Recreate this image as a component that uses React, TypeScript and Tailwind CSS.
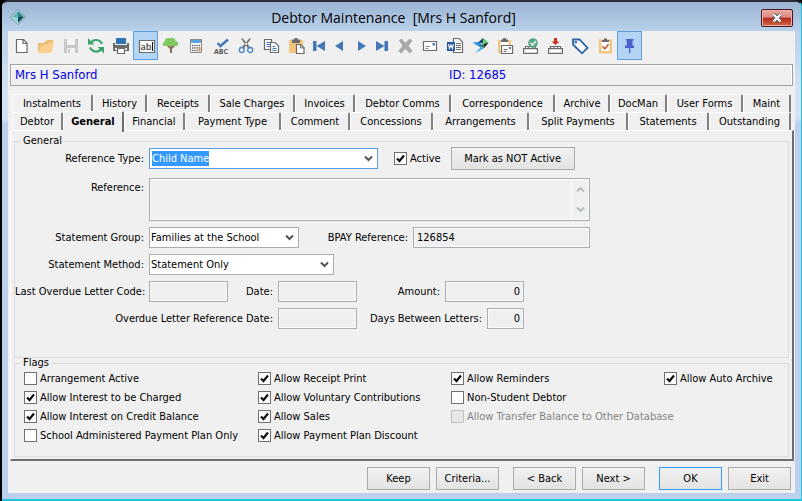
import React, { useState } from "react";

const TABS_BACK = ["Instalments", "History", "Receipts", "Sale Charges", "Invoices", "Debtor Comms", "Correspondence", "Archive", "DocMan", "User Forms", "Maint"];
const TABS_FRONT = ["Debtor", "General", "Financial", "Payment Type", "Comment", "Concessions", "Arrangements", "Split Payments", "Statements", "Outstanding"];

type Flag = { label: string; checked?: boolean; disabled?: boolean };

const FLAG_COLUMNS: Flag[][] = [
  [
    { label: "Arrangement Active" },
    { label: "Allow Interest to be Charged", checked: true },
    { label: "Allow Interest on Credit Balance", checked: true },
    { label: "School Administered Payment Plan Only" },
  ],
  [
    { label: "Allow Receipt Print", checked: true },
    { label: "Allow Voluntary Contributions", checked: true },
    { label: "Allow Sales", checked: true },
    { label: "Allow Payment Plan Discount", checked: true },
  ],
  [
    { label: "Allow Reminders", checked: true },
    { label: "Non-Student Debtor" },
    { label: "Allow Transfer Balance to Other Database", disabled: true },
  ],
  [{ label: "Allow Auto Archive", checked: true }],
];

const G = "#6b6b6b";
const B = "#4377b8";

const Tray = () => (
  <g fill="#fff" stroke={G} strokeWidth="1.2">
    <path d="M8.5 18v-2.500h3.500V18M12 18v-2.500h3.500V18M15.500 18v-2.500h3V18" />
    <path d="M6.6 17.6h13.8v4.800H6.6z" />
  </g>
);

const ICONS: { name: string; narrow?: boolean; active?: boolean; art: React.ReactNode }[] = [
  {
    name: "New",
    art: <path d="M8.500 8.500h7l3.500 3.500v9.500H8.500zM15 8.500v4h4" fill="#fff" stroke={G} strokeWidth="1.2" />,
  },
  {
    name: "Open",
    art: (
      <>
        <path d="M5 22V12h5.5l1.5-1.5h1L14 9h6v5H9z" fill="#eebb74" />
        <path d="M5 22l4-8.5h5l2-2h5L18.5 22z" fill="#fbcf8e" />
      </>
    ),
  },
  {
    name: "Save",
    art: (
      <>
        <path d="M6 8h14v14H6z" fill="#c9c9c9" />
        <path d="M9 8h8v6H9zM9 17h8v5H9z" fill="#f3f3f3" />
        <path d="M10 18h2v4h-2z" fill="#c9c9c9" />
      </>
    ),
  },
  {
    name: "Refresh",
    art: (
      <g fill="none" stroke="#3da56b" strokeWidth="2.2">
        <path d="M8 12.5C9.500 8 16.500 7.500 19 13" />
        <path d="M18.500 17.500C16.500 21.500 10 22 7 16.500" />
        <path d="M5 7v6.500h6.500zM21 22.500V16h-6.500z" fill="#3da56b" stroke="none" />
      </g>
    ),
  },
  {
    name: "Print",
    art: (
      <>
        <path d="M5 12h16v8H5z" fill={G} />
        <path d="M7 11h12v3H7z" fill="#efefef" />
        <path d="M8 7h10v6H8z" fill="#2f73b5" />
        <path d="M7 17h12v2H7z" fill="#efefef" />
        <path d="M9.5 17.5h7v5h-7z" fill="#fff" stroke={G} strokeWidth="1.200" />
      </>
    ),
  },
  {
    name: "Edit text",
    active: true,
    art: (
      <>
        <path d="M6.5 9.500h15v12h-15z" fill="#fff" stroke={G} strokeWidth="1.2" />
        <text x="7.500" y="19" fontSize="9" fontWeight="600" fill="#444" fontFamily="Open Sans, sans-serif">ab</text>
        <path d="M19.500 11v9" stroke="#111" />
      </>
    ),
  },
  {
    name: "Tree",
    art: (
      <>
        <path d="M12 22v-4l-4-4 1-1 3.500 2.500L17 13l1 1-4 4v4z" fill="#8c6f55" />
        <path d="M6 15c-2-1-1-4 .5-4C6 8 9 6 11.500 7.500 14 5.500 18 7.500 17.500 10c3 .5 3.500 3.500 1.500 5z" fill="#80ca62" />
      </>
    ),
  },
  {
    name: "Calculator",
    art: (
      <>
        <path d="M7.500 8.500h11v13h-11z" fill="#fff" stroke="#8a8a8a" />
        <path d="M8 9h10v3H8z" fill="#5aa5dd" />
        <path d="M9 14.500h8.500M9 17h8.500M9 19.500h8.500" stroke={G} strokeWidth="1.400" strokeDasharray="1.500 .7" />
        <path d="M15.700 16.300h1.800v4h-1.800z" fill="#e5943e" />
      </>
    ),
  },
  {
    name: "Spelling",
    art: (
      <>
        <path d="M9.500 12l3 3L20 8.500" fill="none" stroke={B} strokeWidth="2.400" />
        <text x="6" y="23" fontSize="7" fontWeight="700" fill="#555" fontFamily="Open Sans, sans-serif">ABC</text>
      </>
    ),
  },
  {
    name: "Cut",
    art: (
      <>
        <path d="M8 7.500h1.800l7.500 9-1.800 1.500zM18 7.500h-1.800l-7.500 9 1.800 1.500z" fill={G} />
        <circle cx="8.800" cy="19" r="2.500" fill="none" stroke="#4f86c6" strokeWidth="1.300" />
        <circle cx="17.200" cy="19" r="2.500" fill="none" stroke="#4f86c6" strokeWidth="1.300" />
      </>
    ),
  },
  {
    name: "Copy",
    art: (
      <>
        <path d="M6.500 8.500h7v10h-7z" fill="#fff" stroke={G} strokeWidth="1.200" />
        <path d="M8.500 11.500h3.500M8.500 13.500h3.500M8.500 15.500h3.500" stroke={B} />
        <path d="M12.500 11.500h4.500l3.500 3.500v6.500h-8z" fill="#fff" stroke={G} strokeWidth="1.200" />
        <path d="M14.500 15.500h2.500M14.500 17.500h4M14.500 19.500h4" stroke={B} />
      </>
    ),
  },
  {
    name: "Paste",
    art: (
      <>
        <path d="M6 9h14v13H6z" fill="#f2c583" />
        <path d="M9 12V8.500h2.500V7h3v1.500H17V12z" fill={G} />
        <path d="M13.500 13.500h4l3.500 3v6h-7.500z" fill="#fff" stroke={G} strokeWidth="1.200" />
        <path d="M17.300 13.600v3.300h3.300" fill="none" stroke={G} />
      </>
    ),
  },
  { name: "First", narrow: true, art: <path d="M5 10h3.500v10H5zM17 10v10l-8.500-5z" fill={B} /> },
  { name: "Previous", narrow: true, art: <path d="M14 10v10l-8-5z" fill={B} /> },
  { name: "Next", narrow: true, art: <path d="M8 10v10l8-5z" fill={B} /> },
  { name: "Last", narrow: true, art: <path d="M5 10v10l8.500-5zM13.500 10H17v10h-3.500z" fill={B} /> },
  {
    name: "Delete",
    art: <path d="M7 9.500L9.500 7.500 13.500 11.800 17.500 7.500 20.500 9.800 16.500 15 20.500 19.800 18 22.500 13.500 18 9 22.500 6.300 20 10.500 15z" fill="#a8a8a8" />,
  },
  {
    name: "Mail",
    art: (
      <>
        <path d="M6.500 10.500h13v9h-13z" fill="#fff" stroke={G} strokeWidth="1.200" />
        <path d="M15.500 12h2.500v2.500h-2.500z" fill={B} />
        <path d="M8.500 15.500h4.500M8.500 17.500h3" stroke="#8a8a8a" />
      </>
    ),
  },
  {
    name: "Word",
    art: (
      <>
        <path d="M11.500 7.500h5.500l3.500 3.500v10.500h-9z" fill="#fff" stroke={G} strokeWidth="1.200" />
        <path d="M14 12.500h5M14 14.500h5M14 16.500h5M14 18.500h5" stroke={G} />
        <path d="M5 11h8v9H5z" fill="#2458a4" />
        <path d="M6.500 13l1 4.500 1.500-3.500 1.500 3.500 1-4.500" fill="none" stroke="#fff" strokeWidth="1.100" />
      </>
    ),
  },
  {
    name: "Synergetic",
    art: (
      <>
        <path d="M5.500 11.500l6.500-.5 4.500 4-3 1.500z" fill="#2f8fe0" />
        <path d="M16 7l-5 4.500 5.500 1z" fill="#174a70" />
        <path d="M16 7l5.500 5-5 1z" fill="#35b44a" />
        <path d="M16 8.500l3 3-2.500 1z" fill="#8fe07a" />
        <path d="M21.500 12l-5 5.500v-4.500z" fill="#111f2b" />
        <path d="M16.500 13v4.500l-4-3z" fill="#1f8a5c" />
        <path d="M14 16l2.500 1.500-8.500 4.500z" fill="#42aaf0" />
      </>
    ),
  },
  {
    name: "Paste mail",
    art: (
      <>
        <path d="M6 9h13v13H6z" fill="#f2c583" />
        <path d="M8.500 11h8v9h-8z" fill="#fff" />
        <path d="M9 11V8.500h2V7h3v1.500h2V11z" fill={G} />
        <path d="M9.500 14.500h11v8h-11z" fill="#fff" stroke={G} strokeWidth="1.200" />
        <path d="M17 16h2v2h-2z" fill={B} />
        <path d="M11.500 18.500h4M11.500 20.500h3" stroke={G} />
      </>
    ),
  },
  {
    name: "Receive",
    art: (
      <>
        <Tray />
        <circle cx="16" cy="12" r="4.800" fill="#5aa88a" />
        <path d="M13.500 12l2 2 3.500-4" fill="none" stroke="#fff" strokeWidth="1.300" />
      </>
    ),
  },
  {
    name: "Download",
    art: (
      <>
        <Tray />
        <path d="M12 7h3v3.500h2.500L13.500 14 9.500 10.500H12z" fill="#c4301c" />
      </>
    ),
  },
  {
    name: "Tag",
    art: (
      <>
        <path d="M6 8.500h6.500l8 8.500-5.500 5.300-9-8.800z" fill="#fff" stroke="#2c62a8" strokeWidth="1.800" />
        <circle cx="8.800" cy="11.200" r="1.300" fill="#2c62a8" />
      </>
    ),
  },
  {
    name: "Tasks",
    art: (
      <>
        <path d="M7 8.500h13V22.500H7z" fill="#f2c583" />
        <path d="M9.500 10.500h8v9.500h-8z" fill="#fff" />
        <path d="M10 11V9h2V7.500h3V9h2v2z" fill={G} />
        <path d="M10.500 15.500l2.300 2.300 3.700-4.600" fill="none" stroke="#c8552e" strokeWidth="1.600" />
      </>
    ),
  },
  {
    name: "Pin",
    active: true,
    art: <path d="M9 8h7.500v1.500H15.500v5H17V17h-3.700v5h-1.300v-5H8v-2.500h1.800v-5H9z" fill="#4c5fcb" />,
  },
];

const Chevron = ({ up = false, color = "#555" }: { up?: boolean; color?: string }) => (
  <svg viewBox="0 0 9 7" className="h-[7px] w-[9px]">
    <path d={up ? "M1 5.500L4.500 2 8 5.500" : "M1 1.500L4.500 5 8 1.500"} fill="none" stroke={color} strokeWidth="2" />
  </svg>
);

const LABEL = "shrink-0 whitespace-nowrap pr-[5px] text-right";

type FieldProps = { id: string; label: string; labelClass: string; className: string; value?: string };

const TextField = ({ id, label, labelClass, className, value = "" }: FieldProps) => (
  <>
    <label htmlFor={id} className={`${LABEL} ${labelClass}`}>
      {label}
    </label>
    <input
      id={id}
      readOnly
      value={value}
      className={`h-[21px] min-w-0 border border-[#abadb3] bg-[#efefef] px-[3px] shadow-[inset_0_0_0_1px_#fafafa] outline-none ${className}`}
    />
  </>
);

const SelectField = ({ id, label, labelClass, className, value = "" }: FieldProps) => (
  <>
    <label htmlFor={id} className={`${LABEL} ${labelClass}`}>
      {label}
    </label>
    <div className={`relative h-[21px] border bg-white ${className}`}>
      <select id={id} className="block h-full w-full appearance-none bg-transparent px-px outline-none">
        <option>{value}</option>
      </select>
      <span className="pointer-events-none absolute inset-y-0 right-1 flex items-center">
        <Chevron />
      </span>
    </div>
  </>
);

const CheckBox = ({ label, checked = false, disabled = false }: Flag) => {
  const [on, setOn] = useState(checked);
  return (
    <label className="flex h-[19px] items-center gap-[3px] whitespace-nowrap">
      <span className="relative block size-[13px] shrink-0">
        <input
          type="checkbox"
          checked={on}
          disabled={disabled}
          onChange={() => setOn(!on)}
          className="peer block size-[13px] appearance-none border border-[#707070] bg-white disabled:border-[#bcc4bf] disabled:bg-[#e6e6e6]"
        />
        <svg viewBox="0 0 13 13" className="pointer-events-none absolute inset-0 hidden size-[13px] peer-checked:block">
          <path d="M3 6.500L5.500 9 10 3.500" fill="none" stroke="#111" strokeWidth="2.200" />
        </svg>
      </span>
      <span className={disabled ? "text-[#838383]" : ""}>{label}</span>
    </label>
  );
};

const Button = ({ children, className = "" }: { children: React.ReactNode; className?: string }) => (
  <button type="button" className={`h-[23px] border bg-linear-to-b from-[#f1f1f1] to-[#e3e3e3] ${className || "w-[63px] border-[#acacac]"}`}>
    {children}
  </button>
);

const TabRow = ({ tabs, selected, className }: { tabs: string[]; selected?: string; className: string }) => (
  <div role="tablist" className={`grid h-[18px] px-[2px] ${className}`}>
    {tabs.map((tab) => (
      <button
        key={tab}
        type="button"
        role="tab"
        aria-selected={tab === selected}
        className={
          tab === selected
            ? "relative z-10 -mt-px -mb-[2px] whitespace-nowrap rounded-t-[2px] border-t border-r-2 border-l border-t-white border-r-[#6e6e6e] border-l-white bg-[#f0f0f0] font-bold"
            : "whitespace-nowrap rounded-t-[2px] border-t border-r-2 border-l border-t-white border-r-[#808080] border-l-white"
        }
      >
        {tab}
      </button>
    ))}
  </div>
);

const Toolbar = () => (
  <div role="toolbar" className="flex h-[29px]">
    {ICONS.map(({ name, narrow, active, art }) => (
      <button
        key={name}
        type="button"
        aria-label={name}
        className={`h-[29px] ${narrow ? "w-[21px]" : "w-[25px]"} ${active ? "bg-[#b3d4f4] outline outline-1 -outline-offset-1 outline-[#5f9fdc]" : ""}`}
      >
        <svg viewBox={narrow ? "0 0 21 29" : "0 0 25 29"} className="block h-full w-full">
          {art}
        </svg>
      </button>
    ))}
  </div>
);

const GeneralGroup = () => (
  <fieldset className="mx-[3px] min-w-0 flex-1 border border-[#dcdcdc]">
    <legend className="ml-[6px] h-[14px] px-[2px] leading-[14px]">General</legend>
    <div className="-mt-px flex flex-col gap-[6px]">
      <div className="mb-[2px] flex items-center">
        <label htmlFor="refType" className={`${LABEL} w-[134px]`}>
          Reference Type:
        </label>
        <div className="relative h-[21px] w-[229px] border border-[#569de5] bg-white">
          <select id="refType" className="block h-full w-full appearance-none bg-[#3399ff] bg-clip-content py-[2px] pr-[168px] pl-[2px] text-white outline-none">
            <option>Child Name</option>
          </select>
          <span className="pointer-events-none absolute inset-y-0 right-1 flex items-center">
            <Chevron />
          </span>
        </div>
        <div className="mr-[10px] ml-4">
          <CheckBox label="Active" checked />
        </div>
        <Button className="w-[124px] border-[#acacac]">Mark as NOT Active</Button>
      </div>
      <div className="flex">
        <label htmlFor="reference" className={`${LABEL} w-[134px] pt-[3px]`}>
          Reference:
        </label>
        <div className="flex h-[43px] w-[441px] border border-[#abadb3] shadow-[inset_0_0_0_1px_#fafafa]">
          <textarea id="reference" readOnly className="block flex-1 resize-none px-[3px] outline-none" />
          <div className="flex w-[18px] flex-col items-center justify-between border-l border-white py-[7px]">
            <Chevron up color="#b4bdb8" />
            <Chevron color="#b4bdb8" />
          </div>
        </div>
      </div>
      <div className="flex items-center">
        <SelectField id="group" label="Statement Group:" labelClass="w-[134px]" className="w-[150px] border-[#abadb3]" value="Families at the School" />
        <TextField id="bpay" label="BPAY Reference:" labelClass="w-[114px]" className="w-[177px]" value="126854" />
      </div>
      <div className="flex items-center">
        <SelectField id="method" label="Statement Method:" labelClass="w-[134px]" className="w-[185px] border-[#abadb3]" value="Statement Only" />
      </div>
      <div className="flex items-center">
        <TextField id="code" label="Last Overdue Letter Code:" labelClass="w-[134px]" className="w-[79px]" />
        <TextField id="date" label="Date:" labelClass="w-[50px]" className="w-[79px]" />
        <TextField id="amount" label="Amount:" labelClass="w-[88px]" className="w-[79px] text-right" value="0" />
      </div>
      <div className="flex items-center">
        <TextField id="refDate" label="Overdue Letter Reference Date:" labelClass="w-[263px]" className="w-[79px]" />
        <TextField id="days" label="Days Between Letters:" labelClass="w-[130px]" className="w-[37px] text-right" value="0" />
      </div>
    </div>
  </fieldset>
);

export default function App() {
  return (
    <div className="flex min-h-screen flex-col bg-black pl-[2px] font-['DejaVu_Sans_Condensed','Open_Sans',sans-serif] text-[11px] leading-[14px] text-black">
      <div className="flex flex-1 flex-col rounded-t-[6px] border-t-2 border-r border-b-2 border-t-[#2a2a35] border-r-[#22c3dd] border-b-[#22c3dd] bg-[#bad0ec] bg-[linear-gradient(#9ab4d3,#b9d1ea_29px,#d3e3f4_90px,#d3e3f4_116px,#bad0ec_122px)] px-[6px] pb-[6px]">
        <header className="flex h-[29px] items-center pr-[2px] pl-[2px]">
          <svg viewBox="0 0 16 16" className="size-4">
            <path d="M8 .5L15.500 8 8 15.500.500 8z" fill="#e3f1f3" stroke="#4d9097" />
            <path d="M8 2v6H2z" fill="#5bb0b4" />
            <path d="M8 2l6 6H8z" fill="#2c8288" />
            <path d="M2 8h6v6z" fill="#8fd0d0" />
            <path d="M14 8H8v6z" fill="#174a52" />
          </svg>
          <h1 className="flex-1 pt-[2px] text-center font-['Open_Sans',sans-serif] text-[14px] leading-5 whitespace-pre">{"Debtor Maintenance  [Mrs H Sanford]"}</h1>
          <button
            type="button"
            aria-label="Close"
            className="mt-[3px] flex h-[18px] w-8 items-center justify-center rounded-[2px] border border-[#4a1520] bg-[linear-gradient(#e8a8a0,#dc8c84_45%,#b8281c_50%,#cc6a40_100%)] shadow-[inset_0_0_0_1px_#eeb0a8]"
          >
            <svg viewBox="0 0 12 10" className="h-[10px] w-3">
              <path d="M2.500 1.500l7 7M9.500 1.500l-7 7" stroke="#5c5c68" strokeWidth="4" />
              <path d="M2.500 1.500l7 7M9.500 1.500l-7 7" stroke="#fff" strokeWidth="2.200" />
            </svg>
          </button>
        </header>

        <main className="flex flex-1 flex-col bg-[#f0f0f0]">
          <Toolbar />
          <div className="mx-[2px] mt-1 flex h-[22px] items-center border border-[#a0a0a0] px-1 text-[13px] text-[#0000e6] shadow-[inset_1px_1px_0_#fff,inset_-1px_0_0_#fff]">
            <span className="w-[434px]">Mrs H Sanford</span>
            <span>ID: 12685</span>
          </div>

          <div className="mx-[2px] mt-2">
            <TabRow tabs={TABS_BACK} className="grid-cols-[81fr_54fr_63fr_85fr_60fr_96fr_104fr_55fr_57fr_76fr_48fr]" />
            <TabRow tabs={TABS_FRONT} selected="General" className="grid-cols-[51fr_61fr_61fr_96fr_69fr_83fr_96fr_99fr_81fr_82fr]" />
          </div>
          <div className="mr-px ml-[2px] flex flex-1 flex-col border-t border-r-2 border-b-2 border-l border-t-white border-r-[#6e6e6e] border-b-[#6e6e6e] border-l-white pt-[3px] pb-[2px]">
            <GeneralGroup />
            <fieldset className="mx-[3px] h-[99px] min-w-0 border border-[#dcdcdc]">
              <legend className="ml-[6px] h-[10px] px-[2px] leading-[10px]">Flags</legend>
              <div className="mt-px grid grid-cols-[minmax(0,234fr)_minmax(0,193fr)_minmax(0,213fr)_minmax(0,124fr)] pl-[9px]">
                {FLAG_COLUMNS.map((column, i) => (
                  <div key={i}>
                    {column.map((flag) => (
                      <CheckBox key={flag.label} {...flag} />
                    ))}
                  </div>
                ))}
              </div>
            </fieldset>
          </div>

          <footer className="flex justify-end gap-[14px] px-1 pt-[6px] pb-[3px]">
            <div className="flex gap-[6px]">
              <Button>Keep</Button>
              <Button>Criteria...</Button>
            </div>
            <div className="flex gap-[6px]">
              <Button>&lt; Back</Button>
              <Button>Next &gt;</Button>
            </div>
            <div className="flex gap-[6px]">
              <Button className="w-[63px] border-[#3399ff]">OK</Button>
              <Button>Exit</Button>
            </div>
          </footer>
        </main>
      </div>
    </div>
  );
}
